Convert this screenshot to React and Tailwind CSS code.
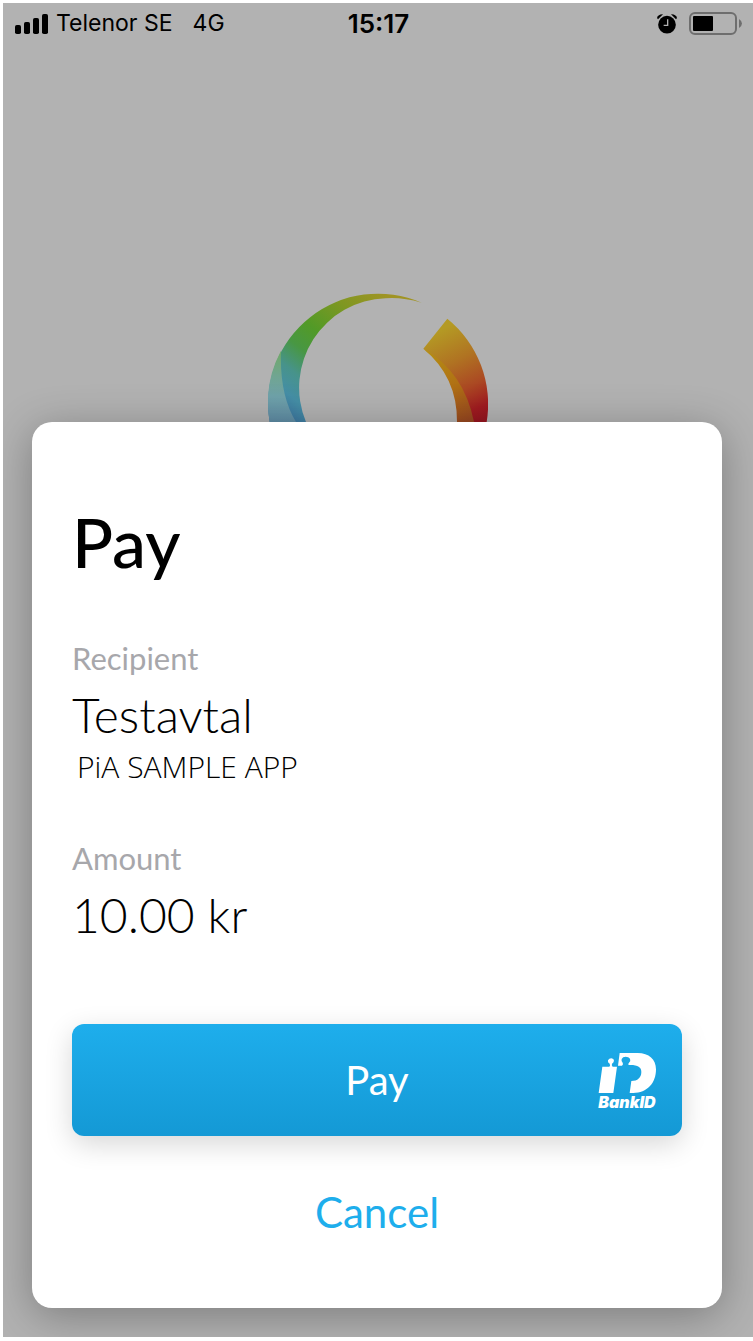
import React from "react";

function SignalIcon() {
  return (
    <svg width="33" height="20" viewBox="0 0 33 20" aria-hidden="true">
      <rect x="0" y="11" width="6" height="9" rx="1.8" />
      <rect x="9" y="8" width="6" height="12" rx="1.8" />
      <rect x="18" y="4" width="6" height="16" rx="1.8" />
      <rect x="27" y="0" width="6" height="20" rx="1.8" />
    </svg>
  );
}

function AlarmIcon() {
  return (
    <svg width="20" height="20" viewBox="0 0 60 60" aria-hidden="true">
      <circle cx="30" cy="32" r="26.5" />
      <path d="M0 12Q4 0 18 1L3 16Z" />
      <path d="M60 12Q56 0 42 1L57 16Z" />
      <path d="M32 16V34H20" fill="none" stroke="#b2b2b2" strokeWidth="4" />
    </svg>
  );
}

function BatteryIcon() {
  return (
    <svg width="53" height="24" viewBox="0 0 53 24" aria-hidden="true">
      <rect x="1" y="1" width="46" height="21" rx="5" fill="none" stroke="#6e6e6e" strokeWidth="2" />
      <rect x="4" y="4" width="20" height="15" rx="1" />
      <path d="M50 7Q53 9 53 11.5Q53 14 50 16Z" fill="#6e6e6e" />
    </svg>
  );
}

function RingLogo() {
  return (
    <svg className="block" width="220" height="129" viewBox="54 39 660 387" aria-hidden="true">
      <defs>
        <linearGradient id="arc" gradientUnits="userSpaceOnUse" x1="420" y1="50" x2="120" y2="426">
          <stop offset="0" stopColor="#a09424" />
          <stop offset="0.22" stopColor="#7f9722" />
          <stop offset="0.45" stopColor="#529a27" />
          <stop offset="0.6" stopColor="#489743" />
          <stop offset="0.74" stopColor="#47938a" />
          <stop offset="0.87" stopColor="#458fa6" />
          <stop offset="1" stopColor="#3c74a0" />
        </linearGradient>
        <linearGradient id="pale" gradientUnits="userSpaceOnUse" x1="95" y1="212" x2="85" y2="426">
          <stop offset="0" stopColor="#70a965" />
          <stop offset="0.35" stopColor="#70a590" />
          <stop offset="0.65" stopColor="#6fa2aa" />
          <stop offset="1" stopColor="#5f8ca5" />
        </linearGradient>
        <linearGradient id="warm" gradientUnits="userSpaceOnUse" x1="560" y1="155" x2="690" y2="420">
          <stop offset="0" stopColor="#b49a24" />
          <stop offset="0.35" stopColor="#b07322" />
          <stop offset="0.65" stopColor="#ab4823" />
          <stop offset="0.88" stopColor="#a01b20" />
          <stop offset="1" stopColor="#97151f" />
        </linearGradient>
        <linearGradient id="amber" gradientUnits="userSpaceOnUse" x1="530" y1="210" x2="640" y2="426">
          <stop offset="0" stopColor="#b58f14" />
          <stop offset="0.55" stopColor="#b07014" />
          <stop offset="1" stopColor="#984820" />
        </linearGradient>
      </defs>
      <path fill="url(#arc)" d="M515 68A330 330 0 0 0 59 426H168A268 268 0 0 1 407 55Q455 51 515 68Z" />
      <path fill="url(#pale)" d="M93 212A330 330 0 0 0 59 426H138Q88 345 93 212Z" />
      <path fill="url(#warm)" d="M592 116A330 330 0 0 1 710 426H660Q620 280 520 206Z" />
      <path fill="url(#amber)" d="M520 206Q642 275 672 426H621Q622 290 520 206Z" />
    </svg>
  );
}

function BankIdLogo() {
  return (
    <span className="flex flex-col items-center pt-[2px] text-white">
      <svg width="58" height="42" viewBox="84 124 174 126" fill="currentColor" aria-hidden="true">
        <path d="M97 168H118Q122 165 119 159Q112 156 114 149Q117 143 124 143Q132 144 132 150Q131 156 126 159Q124 164 128 168H141L130 247H86Z" />
        <path d="M149 127H203C237 127 258 146 258 176C258 218 231 247 190 247H179L184 211C203 211 214 201 214 184C214 168 202 162 176 163Q173 160 177 156Q183 151 180 144Q176 138 167 138Q158 138 155 145Q153 151 158 156Q161 161 156 165H144Z" />
      </svg>
      <span className="font-[Inter,sans-serif] text-base font-black italic leading-4">BankID</span>
    </span>
  );
}

function Field({ label, value, children }) {
  return (
    <div>
      <dt className="text-[31px] leading-10 text-[#a7a7ab]">{label}</dt>
      <dd className="mt-[9px] text-5xl font-light leading-14 text-black">{value}</dd>
      {children}
    </div>
  );
}

export default function App() {
  return (
    <div className="min-h-screen bg-white pb-1 pl-[3px] pt-[3px] font-[Lato,sans-serif]">
      <div className="overflow-hidden bg-[#b2b2b2] pb-[29px]">
        <header className="grid h-[41px] grid-cols-[1fr_auto_1fr] items-center pl-3 pr-[11px] font-[Inter,sans-serif] text-[23px] text-black">
          <div className="flex items-center gap-2">
            <SignalIcon />
            <span>Telenor SE</span>
            <span className="ml-3">4G</span>
          </div>
          <time className="text-[26px] font-semibold">15:17</time>
          <div className="flex items-center justify-end gap-3">
            <AlarmIcon />
            <BatteryIcon />
          </div>
        </header>

        <div className="flex justify-center pt-[249px]">
          <RingLogo />
        </div>

        <main className="relative ml-[29px] mr-[31px] rounded-[20px] bg-white px-10 pb-[72px] pt-20 shadow-[0_8px_44px_rgba(0,0,0,0.3)]">
          <h1 className="text-[68px] font-medium leading-20 text-black">Pay</h1>
          <dl className="mt-14 flex flex-col gap-[51px]">
            <Field label="Recipient" value="Testavtal">
              <dd className="mt-1 pl-[5px] font-['Open_Sans',sans-serif] text-[30px] font-light leading-10 text-black">
                PiA SAMPLE APP
              </dd>
            </Field>
            <Field label="Amount" value="10.00 kr" />
          </dl>
          <button
            type="button"
            className="mt-[81px] grid h-28 w-full grid-cols-[1fr_auto_1fr] items-center rounded-xl bg-linear-to-b from-[#1eaeec] to-[#1499d5] px-[26px] text-white shadow-[0_8px_28px_rgba(0,0,0,0.16)]"
          >
            <span className="col-start-2 text-[40px] leading-12">Pay</span>
            <span className="justify-self-end">
              <BankIdLogo />
            </span>
          </button>
          <button type="button" className="mx-auto mt-[52px] block text-[42px] leading-12 text-[#1eaeec]">
            Cancel
          </button>
        </main>
      </div>
    </div>
  );
}
